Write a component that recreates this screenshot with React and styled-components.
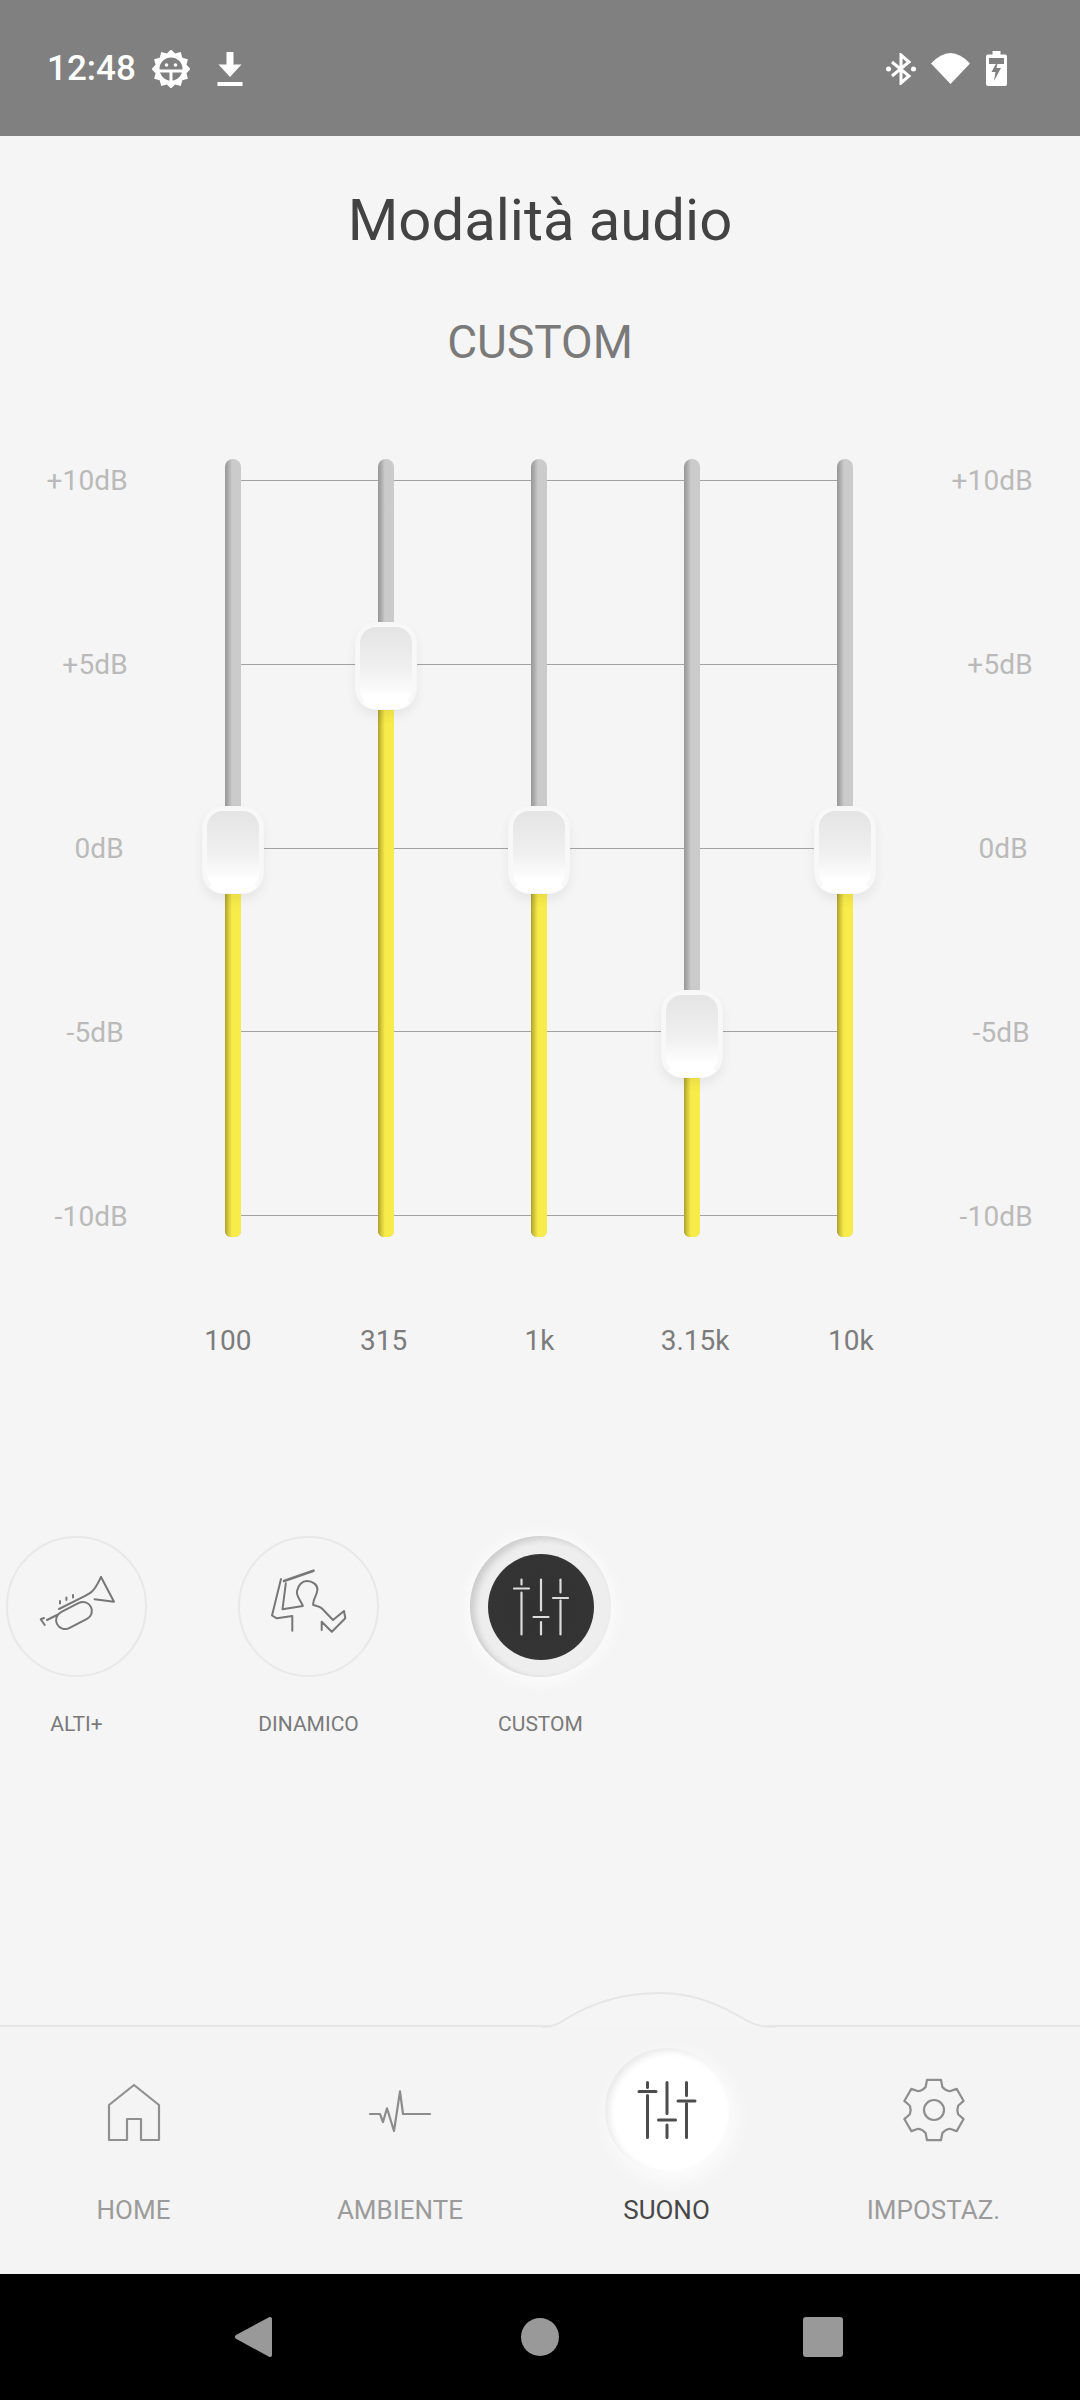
import React from "react";
import styled, { createGlobalStyle } from "styled-components";

const Global = createGlobalStyle`
  html, body { margin: 0; padding: 0; background: #f5f5f5; }
  * { box-sizing: border-box; }
  body { font-family: Roboto, "Liberation Sans", sans-serif; }
`;

const Screen = styled.div`
  width: 1080px;
  height: 2400px;
  display: flex;
  flex-direction: column;
  background: #f5f5f5;
  overflow: hidden;
`;

const StatusBar = styled.header`
  height: 136px;
  flex: none;
  background: #808080;
  display: flex;
  align-items: center;
  padding: 2px 73px 0 47px;
  color: #fff;
`;
const Clock = styled.span`
  font-size: 35px;
  font-weight: 500;
  line-height: 40px;
  width: 105px;
`;
const StatusIcon = styled.svg`
  display: block;
  flex: none;
  margin-left: ${(p) => p.$left || 0}px;
  margin-top: -1px;
`;
const Spacer = styled.div`
  flex: 1;
`;

const Main = styled.main`
  flex: 1;
  display: flex;
  flex-direction: column;
  align-items: stretch;
`;
const Title = styled.h1`
  margin: 51px 0 0;
  font-size: 58px;
  font-weight: 400;
  line-height: 66px;
  color: #434343;
  text-align: center;
`;
const Subtitle = styled.h2`
  margin: 62px 0 0;
  font-size: 46px;
  font-weight: 400;
  line-height: 54px;
  color: #7a7a7a;
  text-align: center;
`;

const Equalizer = styled.section`
  margin-top: 90px;
  height: 778px;
  display: flex;
`;
const DbScale = styled.div`
  width: ${(p) => p.$width}px;
  padding: 6px ${(p) => p.$right}px 4px;
  display: flex;
  flex-direction: column;
  justify-content: space-between;
  align-items: flex-end;
`;
const DbLabel = styled.span`
  font-size: 28px;
  letter-spacing: 0.2px;
  line-height: 32px;
  height: 32px;
  color: #bababa;
  margin-right: ${(p) => p.$inset || 0}px;
`;
const Faders = styled.div`
  position: relative;
  width: 628px;
  display: flex;
  justify-content: space-between;
`;
const GridLines = styled.div`
  position: absolute;
  inset: 21px 8px 21px 8px;
  display: flex;
  flex-direction: column;
  justify-content: space-between;
`;
const GridLine = styled.div`
  height: 1px;
  background: #a2a2a2;
`;
const Fader = styled.div`
  position: relative;
  width: 16px;
  height: 100%;
`;
const Track = styled.div`
  position: relative;
  width: 16px;
  height: 100%;
  overflow: hidden;
  border-radius: 8px 8px 6px 6px;
  background: linear-gradient(90deg, #979797 0, #aaaaaa 3px, #cbcbcb 7px, #cbcbcb 100%);
`;
const Fill = styled.div`
  position: absolute;
  left: 0;
  right: 0;
  bottom: 0;
  height: ${(p) => 389 + p.$db * 36.8}px;
  background: linear-gradient(90deg, #ad9f2c 0, #d2c53a 3px, #f8ec4b 7px, #f8ec4b 100%);
`;
const Thumb = styled.div`
  position: absolute;
  left: -22px;
  top: ${(p) => 348 - p.$db * 36.8}px;
  width: 60px;
  height: 86px;
  border-radius: 20px;
  border: 4px solid #f8f8f8;
  border-bottom-color: #fefefe;
  background: linear-gradient(180deg, #e3e3e3 0%, #f0f0f0 55%, #ffffff 85%);
  background-origin: border-box;
  box-shadow: 0 0 0 1px #f6f6f6, 0 6px 12px rgba(0, 0, 0, 0.07);
`;

const FreqRow = styled.div`
  margin-top: 88px;
  padding-left: 150px;
  display: grid;
  grid-template-columns: repeat(5, 155.75px);
`;
const FreqLabel = styled.span`
  font-size: 28px;
  line-height: 32px;
  color: #7c7c7c;
  text-align: center;
`;

const Modes = styled.section`
  margin-top: 179px;
  padding-left: 6px;
  display: flex;
  gap: 91px;
`;
const Mode = styled.div`
  width: 141px;
  display: flex;
  flex-direction: column;
  align-items: center;
`;
const ModeDisc = styled.div`
  width: 141px;
  height: 141px;
  border-radius: 50%;
  border: 2px solid #e8e8e8;
  display: flex;
  align-items: center;
  justify-content: center;
`;
const ModeDiscActive = styled.div`
  width: 141px;
  height: 141px;
  border-radius: 50%;
  background: #eeeeee;
  display: flex;
  align-items: center;
  justify-content: center;
  box-shadow: inset 5px 3px 6px rgba(0, 0, 0, 0.14), inset 0 -2px 4px rgba(0, 0, 0, 0.02),
    0 2px 10px 6px #fafafa;
`;
const ModeCore = styled.div`
  width: 106px;
  height: 106px;
  border-radius: 50%;
  background: radial-gradient(circle, #313131 0%, #343434 68%, #484848 100%);
  display: flex;
  align-items: center;
  justify-content: center;
`;
const ModeLabel = styled.span`
  margin-top: 35px;
  font-size: 21px;
  line-height: 24px;
  color: #7a7a7a;
  white-space: nowrap;
`;

const Dock = styled.nav`
  position: absolute;
  left: 0;
  top: 2025px;
  width: 1080px;
  height: 249px;
  border-top: 2px solid #e6e6e6;
  background: #f4f4f4;
  padding: 21px 0 0;
  display: grid;
  grid-template-columns: 267px 266px 267px 267px;
`;
const DockBump = styled.svg`
  position: absolute;
  left: 0;
  top: -37px;
  display: block;
`;
const DockItem = styled.div`
  display: flex;
  flex-direction: column;
  align-items: center;
`;
const DockIconSlot = styled.div`
  width: 124px;
  height: 124px;
  display: flex;
  align-items: center;
  justify-content: center;
  border-radius: 50%;
`;
const DockIconActive = styled(DockIconSlot)`
  background: #fff;
  box-shadow: inset 4px 3px 7px rgba(0, 0, 0, 0.09), 5px 7px 14px 4px #fbfbfb;
`;
const DockLabel = styled.span`
  margin-top: 21px;
  font-size: 26px;
  line-height: 34px;
  color: ${(p) => (p.$active ? "#484848" : "#9b9b9b")};
  white-space: nowrap;
`;

const NavBar = styled.div`
  position: absolute;
  left: 0;
  top: 2274px;
  width: 1080px;
  height: 126px;
  background: #000;
  display: flex;
  align-items: center;
  padding-left: 235px;
`;
const NavBack = styled.svg`
  display: block;
`;
const NavHome = styled.div`
  width: 38px;
  height: 38px;
  border-radius: 50%;
  background: #999;
  margin: 0 244px 0 249px;
`;
const NavRecent = styled.div`
  width: 40px;
  height: 40px;
  border-radius: 3px;
  background: #999;
`;

function sunPath(n, R, r, c) {
  let d = "";
  for (let i = 0; i < n * 2; i++) {
    const a = (Math.PI * i) / n - Math.PI / 2;
    const q = i % 2 ? r : R;
    d += `${i ? "L" : "M"}${(c + q * Math.cos(a)).toFixed(2)} ${(c + q * Math.sin(a)).toFixed(2)}`;
  }
  return d + "Z";
}

function gearPath(c, R, S, V) {
  const pt = (deg, r) => {
    const a = (deg * Math.PI) / 180;
    return `${(c + r * Math.cos(a)).toFixed(2)} ${(c + r * Math.sin(a)).toFixed(2)}`;
  };
  let d = "";
  for (let k = 0; k < 6; k++) {
    const a = k * 60 - 90;
    d += `${k ? "L" : "M"}${pt(a - 13, R)}L${pt(a + 13, R)}L${pt(a + 20, S)}Q${pt(a + 30, V)} ${pt(a + 40, S)}`;
  }
  return d + "Z";
}

const SliderLines = ({ color, width, size, stroke }) => (
  <svg width={size} height={size} viewBox="0 0 60 60" fill="none" stroke={color} strokeWidth={stroke} strokeLinecap="round">
    <path d="M10.5 2.5v5M10.5 15.5v42M30 2.5v31M30 45v12.5M49.500 2.500v13M49.500 23.500v34" />
    <path d={`M${10.5 - width / 2} 11.5h${width}M${30 - width / 2} 40h${width}M${49.5 - width / 2} 21h${width}`} />
  </svg>
);

const HomeIcon = () => (
  <svg width="60" height="60" viewBox="0 0 60 60" fill="none" stroke="#909090" strokeWidth="2.2" strokeLinejoin="round" style={{ transform: "translateY(2px)" }}>
    <path d="M30 3 5 23v35h18V37h14v21h18V23Z" />
  </svg>
);
const PulseIcon = () => (
  <svg width="62" height="44" viewBox="0 0 62 44" fill="none" stroke="#8c8c8c" strokeWidth="2.2" strokeLinejoin="round" strokeLinecap="round" style={{ transform: "translateY(2px)" }}>
    <path d="M1 24h10l3 8 4-13.700 7 22.700 6-39.700 3 22.700h27" />
  </svg>
);
const GearIcon = () => (
  <svg width="66" height="66" viewBox="0 0 66 66" fill="none" stroke="#8e8e8e" strokeWidth="2.2" strokeLinejoin="round">
    <path d={gearPath(33, 31, 24.5, 22.5)} />
    <circle cx="33" cy="33" r="10" />
  </svg>
);
const TrumpetIcon = () => (
  <svg width="137" height="137" viewBox="2 2 137 137" fill="none" stroke="#777" strokeWidth="2" strokeLinecap="round" strokeLinejoin="round">
    <path d="M95 41 108 65.700 88.600 63.300M95 41c-3 6-5 11-9.300 14.700-3 2.500-6 3.500-8.100 5L53 73" />
    <rect x="49" y="70.500" width="38" height="18" rx="9" transform="rotate(-27 68 79.500)" />
    <path d="M41 84 51 79M38.700 89 34.700 83.300 38 82" />
    <path d="M54 65l0 2.500M60.400 61.500l0 2.500M67 59l0 2.500" />
  </svg>
);
const ConductorIcon = () => (
  <svg width="137" height="137" viewBox="2 2 137 137" fill="none" stroke="#777" strokeWidth="2" strokeLinecap="round" strokeLinejoin="round">
    <path d="M46 45 75.500 34.700" strokeWidth="2.600" />
    <path d="M43 43 34 79.500 38.800 82.300 54.300 80V94.700" />
    <path d="M47.800 47.300 44.500 73.300 64.900 70C62 63 58 60 59 55c1-6 5.500-10 9.800-10 6 0 11 4 10.600 9-.3 5-5 10-4.100 15 3 1 6 1 8.400 3.300L95 84l11-9 1.300 7.300L93.800 95.700 83.700 85.700V94" />
  </svg>
);

const dbLeft = [["+10dB", 0], ["+5dB", 0], ["0dB", 4], ["-5dB", 4], ["-10dB", 0]];
const dbRight = [["+10dB", 0], ["+5dB", 0], ["0dB", 5], ["-5dB", 3], ["-10dB", 0]];
const bands = [
  { freq: "100", db: 0 },
  { freq: "315", db: 5 },
  { freq: "1k", db: 0 },
  { freq: "3.15k", db: -5 },
  { freq: "10k", db: 0 },
];

export default function App() {
  return (
    <Screen>
      <Global />
      <StatusBar>
        <Clock>12:48</Clock>
        <StatusIcon width="38" height="38" viewBox="0 0 38 38" $left={0}>
          <path fillRule="evenodd" fill="#fff" d={sunPath(12, 19.5, 16, 19) + "M19 7.500A11.500 11.500 0 1 0 19 30.500A11.500 11.500 0 1 0 19 7.500Z"} />
          <path d="M7 21H31M19 21V31" stroke="#fff" strokeWidth="3" />
          <circle cx="14.500" cy="15" r="1.800" fill="#fff" />
          <circle cx="23.500" cy="15" r="1.800" fill="#fff" />
        </StatusIcon>
        <StatusIcon width="26" height="36" viewBox="0 0 26 36" $left={27}>
          <path d="M9.500 1h7v12.500h8L13 26 1.500 13.500h8Z M0.500 31h25v4h-25Z" fill="#fff" />
        </StatusIcon>
        <Spacer />
        <StatusIcon width="30" height="32" viewBox="0 0 30 32">
          <path d="M6 9 23 23 15 30V2l8 7L6 23" fill="none" stroke="#fff" strokeWidth="3" />
          <circle cx="2.500" cy="16" r="2.500" fill="#fff" />
          <circle cx="27.500" cy="16" r="2.500" fill="#fff" />
        </StatusIcon>
        <StatusIcon width="39" height="31" viewBox="0 0 39 31" $left={15}>
          <path d="M0 10.500Q19.500-10.500 39 10.500L19.500 31Z" fill="#fff" />
        </StatusIcon>
        <StatusIcon width="21" height="35" viewBox="0 0 21 35" $left={16}>
          <path d="M6.500 0h8v3.500h4.500a2 2 0 0 1 2 2V33a2 2 0 0 1-2 2H2a2 2 0 0 1-2-2V5.500a2 2 0 0 1 2-2h4.500Z" fill="#fff" />
          <rect x="3" y="7" width="15" height="6" fill="#808080" />
          <path d="M12 9 5.500 21h4l-1.500 9 7-13h-4.500Z" fill="#808080" />
        </StatusIcon>
      </StatusBar>

      <Main>
        <Title>Modalità audio</Title>
        <Subtitle>CUSTOM</Subtitle>
        <Equalizer>
          <DbScale $width={225} $right={97}>
            {dbLeft.map(([t, i]) => (
              <DbLabel key={t} $inset={i}>{t}</DbLabel>
            ))}
          </DbScale>
          <Faders>
            <GridLines>
              {dbLeft.map(([t]) => (
                <GridLine key={t} />
              ))}
            </GridLines>
            {bands.map((b) => (
              <Fader key={b.freq}>
                <Track>
                  <Fill $db={b.db} />
                </Track>
                <Thumb $db={b.db} />
              </Fader>
            ))}
          </Faders>
          <DbScale $width={227} $right={47}>
            {dbRight.map(([t, i]) => (
              <DbLabel key={t} $inset={i}>{t}</DbLabel>
            ))}
          </DbScale>
        </Equalizer>
        <FreqRow>
          {bands.map((b) => (
            <FreqLabel key={b.freq}>{b.freq}</FreqLabel>
          ))}
        </FreqRow>
        <Modes>
          <Mode>
            <ModeDisc>
              <TrumpetIcon />
            </ModeDisc>
            <ModeLabel>ALTI+</ModeLabel>
          </Mode>
          <Mode>
            <ModeDisc>
              <ConductorIcon />
            </ModeDisc>
            <ModeLabel>DINAMICO</ModeLabel>
          </Mode>
          <Mode>
            <ModeDiscActive>
              <ModeCore>
                <SliderLines color="#dcdcdc" width={15} size={60} stroke={2.2} />
              </ModeCore>
            </ModeDiscActive>
            <ModeLabel>CUSTOM</ModeLabel>
          </Mode>
        </Modes>
      </Main>

      <Dock>
        <DockBump width="1080" height="38" viewBox="0 1990 1080 38" fill="#f5f5f5" stroke="#e6e6e6" strokeWidth="2">
          <path d="M542 2027C552 2027 558 2024 566 2019 590 2004 620 1993 660 1993 695 1993 722 2006 744 2019 752 2024 760 2027 776 2027" />
        </DockBump>
        <DockItem>
          <DockIconSlot><HomeIcon /></DockIconSlot>
          <DockLabel>HOME</DockLabel>
        </DockItem>
        <DockItem>
          <DockIconSlot><PulseIcon /></DockIconSlot>
          <DockLabel>AMBIENTE</DockLabel>
        </DockItem>
        <DockItem>
          <DockIconActive>
            <SliderLines color="#4c4c4c" width={17} size={60} stroke={3} />
          </DockIconActive>
          <DockLabel $active>SUONO</DockLabel>
        </DockItem>
        <DockItem>
          <DockIconSlot><GearIcon /></DockIconSlot>
          <DockLabel>IMPOSTAZ.</DockLabel>
        </DockItem>
      </Dock>

      <NavBar>
        <NavBack width="37" height="42" viewBox="0 0 37 42">
          <path d="M34 1.200 1 19a2.500 2.500 0 0 0 0 3.800L34 40.800a2 2 0 0 0 3-1.800V3a2 2 0 0 0-3-1.800Z" fill="#999" />
        </NavBack>
        <NavHome />
        <NavRecent />
      </NavBar>
    </Screen>
  );
}
